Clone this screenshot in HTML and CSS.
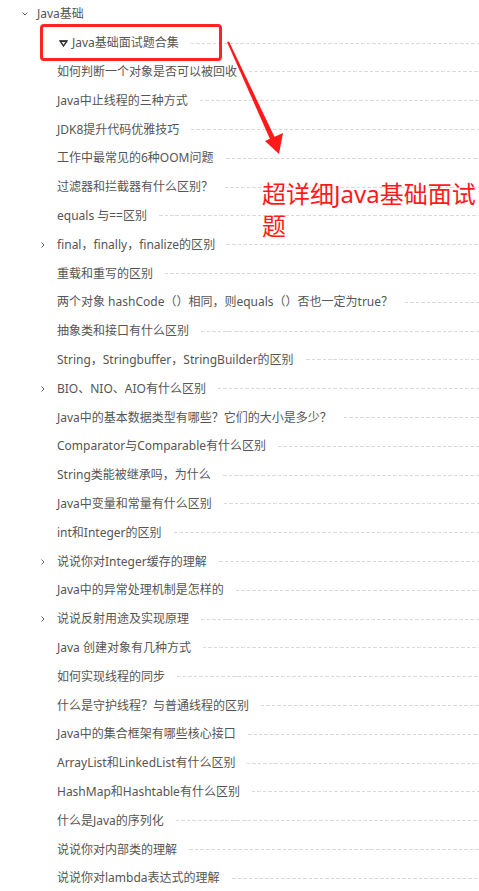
FILE: index.html
```html
<!DOCTYPE html>
<html lang="zh">
<head>
<meta charset="utf-8">
<title>Java基础</title>
<link rel="stylesheet" href="styles.css">
</head>
<body>
<div class="tree">
  <div class="row root">
    <span class="toggle"><svg width="8" height="6" viewBox="0 0 8 6"><path d="M1.5 1.5 L4 4 L6.5 1.5" fill="none" stroke="#666" stroke-width="1"/></svg></span>
    <span class="label">Java基础</span>
  </div>
  <div class="children">
    <div class="row child">
      <span class="toggle"></span>
      <span class="label"><svg class="tri" width="9" height="7" viewBox="0 0 9 7"><path d="M1 1 H8 L4.5 6 Z" fill="none" stroke="#333" stroke-width="1.4" stroke-linejoin="miter"/><path d="M1 1.3 H8" stroke="#333" stroke-width="1.6"/></svg>Java基础面试题合集</span>
      <span class="dash"></span>
    </div>
    <div class="row child"><span class="toggle"></span><span class="label">如何判断一个对象是否可以被回收</span><span class="dash"></span></div>
    <div class="row child"><span class="toggle"></span><span class="label">Java中止线程的三种方式</span><span class="dash"></span></div>
    <div class="row child"><span class="toggle"></span><span class="label">JDK8提升代码优雅技巧</span><span class="dash"></span></div>
    <div class="row child"><span class="toggle"></span><span class="label">工作中最常见的6种OOM问题</span><span class="dash"></span></div>
    <div class="row child"><span class="toggle"></span><span class="label">过滤器和拦截器有什么区别？</span><span class="dash"></span></div>
    <div class="row child"><span class="toggle"></span><span class="label">equals 与==区别</span><span class="dash"></span></div>
    <div class="row child"><span class="toggle"><svg width="6" height="8" viewBox="0 0 6 8"><path d="M1.5 1.5 L4 4 L1.5 6.5" fill="none" stroke="#666" stroke-width="1"/></svg></span><span class="label">final，finally，finalize的区别</span><span class="dash"></span></div>
    <div class="row child"><span class="toggle"></span><span class="label">重载和重写的区别</span><span class="dash"></span></div>
    <div class="row child"><span class="toggle"></span><span class="label">两个对象 hashCode（）相同，则equals（）否也一定为true？</span><span class="dash"></span></div>
    <div class="row child"><span class="toggle"></span><span class="label">抽象类和接口有什么区别</span><span class="dash"></span></div>
    <div class="row child"><span class="toggle"></span><span class="label">String，Stringbuffer，StringBuilder的区别</span><span class="dash"></span></div>
    <div class="row child"><span class="toggle"><svg width="6" height="8" viewBox="0 0 6 8"><path d="M1.5 1.5 L4 4 L1.5 6.5" fill="none" stroke="#666" stroke-width="1"/></svg></span><span class="label">BIO、NIO、AIO有什么区别</span><span class="dash"></span></div>
    <div class="row child"><span class="toggle"></span><span class="label">Java中的基本数据类型有哪些？它们的大小是多少？</span><span class="dash"></span></div>
    <div class="row child"><span class="toggle"></span><span class="label">Comparator与Comparable有什么区别</span><span class="dash"></span></div>
    <div class="row child"><span class="toggle"></span><span class="label">String类能被继承吗，为什么</span><span class="dash"></span></div>
    <div class="row child"><span class="toggle"></span><span class="label">Java中变量和常量有什么区别</span><span class="dash"></span></div>
    <div class="row child"><span class="toggle"></span><span class="label">int和Integer的区别</span><span class="dash"></span></div>
    <div class="row child"><span class="toggle"><svg width="6" height="8" viewBox="0 0 6 8"><path d="M1.5 1.5 L4 4 L1.5 6.5" fill="none" stroke="#666" stroke-width="1"/></svg></span><span class="label">说说你对Integer缓存的理解</span><span class="dash"></span></div>
    <div class="row child"><span class="toggle"></span><span class="label">Java中的异常处理机制是怎样的</span><span class="dash"></span></div>
    <div class="row child"><span class="toggle"><svg width="6" height="8" viewBox="0 0 6 8"><path d="M1.5 1.5 L4 4 L1.5 6.5" fill="none" stroke="#666" stroke-width="1"/></svg></span><span class="label">说说反射用途及实现原理</span><span class="dash"></span></div>
    <div class="row child"><span class="toggle"></span><span class="label">Java 创建对象有几种方式</span><span class="dash"></span></div>
    <div class="row child"><span class="toggle"></span><span class="label">如何实现线程的同步</span><span class="dash"></span></div>
    <div class="row child"><span class="toggle"></span><span class="label">什么是守护线程？与普通线程的区别</span><span class="dash"></span></div>
    <div class="row child"><span class="toggle"></span><span class="label">Java中的集合框架有哪些核心接口</span><span class="dash"></span></div>
    <div class="row child"><span class="toggle"></span><span class="label">ArrayList和LinkedList有什么区别</span><span class="dash"></span></div>
    <div class="row child"><span class="toggle"></span><span class="label">HashMap和Hashtable有什么区别</span><span class="dash"></span></div>
    <div class="row child"><span class="toggle"></span><span class="label">什么是Java的序列化</span><span class="dash"></span></div>
    <div class="row child"><span class="toggle"></span><span class="label">说说你对内部类的理解</span><span class="dash"></span></div>
    <div class="row child"><span class="toggle"></span><span class="label">说说你对lambda表达式的理解</span><span class="dash"></span></div>
  </div>
</div>

<div class="highlight-box"></div>
<svg class="arrow" width="479" height="200" viewBox="0 0 479 200">
  <polygon points="227,42 229,41.5 276,140 271.5,142.5" fill="#ff1a1a"/>
  <polygon points="279,154 265,141 283,133" fill="#ff1a1a"/>
</svg>
<div class="note">超详细Java基础面试<br>题</div>
</body>
</html>
```
FILE: styles.css
```css
html, body {
  margin: 0;
  padding: 0;
  background: #fff;
}
body {
  font-family: "Noto Sans", "Noto Sans CJK SC", sans-serif;
  font-size: 12px;
  color: #555;
  position: relative;
  width: 479px;
  height: 891px;
  overflow: hidden;
}
.tree {
  display: flex;
  flex-direction: column;
}
.row {
  display: flex;
  align-items: center;
  height: 28.8px;
}
.toggle {
  display: flex;
  align-items: center;
  justify-content: center;
  width: 10px;
  height: 10px;
  flex: none;
}
.root .toggle {
  margin-left: 20px;
  margin-right: 7px;
}
.child .toggle {
  margin-left: 38px;
  margin-right: 9px;
}
.label {
  white-space: nowrap;
  display: flex;
  align-items: center;
  line-height: 16px;
}
.tri {
  margin-left: 2px;
  margin-right: 4px;
}
.dash {
  flex: 1;
  height: 1px;
  margin-left: 12px;
  background: repeating-linear-gradient(to right, #dadada 0 3.5px, transparent 3.5px 5.5px);
}
.highlight-box {
  position: absolute;
  left: 40px;
  top: 24px;
  width: 176px;
  height: 31px;
  border: 3px solid #ff2323;
  border-radius: 4px;
}
.arrow {
  position: absolute;
  left: 0;
  top: 0;
}
.note {
  position: absolute;
  left: 262px;
  top: 178px;
  font-family: "Noto Sans", "Noto Sans CJK SC", sans-serif;
  font-size: 24px;
  line-height: 32px;
  color: #ff1a1a;
  white-space: nowrap;
}
```
